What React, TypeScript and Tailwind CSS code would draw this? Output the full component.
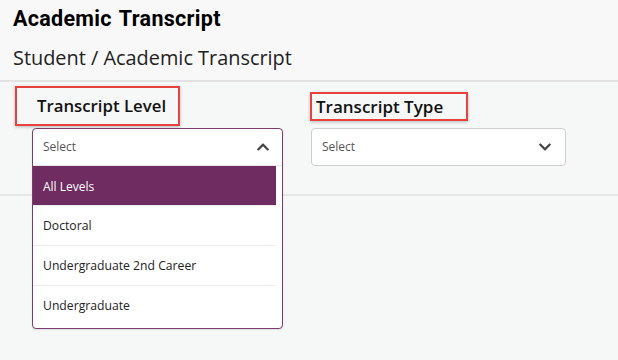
import { FaChevronDown, FaChevronUp } from 'react-icons/fa';

const levels = ['All Levels', 'Doctoral', 'Undergraduate 2nd Career', 'Undergraduate'];

export default function App() {
  return (
    <div className="w-[618px] h-[360px] overflow-hidden bg-[#f6f7f7] font-['Open_Sans',sans-serif] text-[#1b1b1b]">
      {/* page header */}
      <div className="h-[82px] px-[13px] pt-[6px] bg-[#f8f8f8] border-b-2 border-[#e2e2e2]">
        <h1 className="font-['Roboto',sans-serif] font-bold text-[21.5px] leading-[26px] text-black tracking-[0.3px] [word-spacing:2px]">
          Academic Transcript
        </h1>
        <div className="mt-[13px] text-[19.9px] leading-[26px] text-[#222]">Student / Academic Transcript</div>
      </div>

      {/* filter panel */}
      <div className="relative h-[114px] border-b-2 border-[#e6e6e6]">
        <div className="flex">
          <div className="relative w-[295px]">
            <div className="ml-[15px] mt-[4px] w-[165px] h-[40px] border-2 border-[#e8413f] shadow-[0_1px_3px_rgba(0,0,0,0.25)] pl-[20px] flex items-center">
              <span className="text-[16.8px] font-semibold text-[#111]">Transcript Level</span>
            </div>
            <div className="absolute left-[32px] top-[46px] w-[251px] z-10 bg-white border border-[#7b3b6c] rounded-[4px] shadow-[0_1px_2px_rgba(0,0,0,0.1)]">
              <div className="h-[37px] flex items-center justify-between pl-[10px] pr-[12px] border-b border-[#e5e5e5]">
                <span className="text-[12px] text-[#555]">Select</span>
                <FaChevronUp className="w-[14px] h-[14px] text-[#444]" />
              </div>
              <ul className="pb-[3px] pr-[6px]">
                {levels.map((l, i) => (
                  <li
                    key={l}
                    className={
                      i === 0
                        ? 'h-[39px] flex items-center pl-[10px] pt-[2px] bg-[#6e2c60] text-white text-[12px]'
                        : 'h-[40px] flex items-center pl-[10px] pt-[2px] text-[12.2px] text-[#222] border-t border-[#ececec]'
                    }
                  >
                    {l}
                  </li>
                ))}
              </ul>
            </div>
          </div>

          <div className="w-[300px] pl-[15px]">
            <div className="mt-[10px] w-[158px] h-[29px] border-2 border-[#e8413f] shadow-[0_1px_3px_rgba(0,0,0,0.25)] pl-[4px] flex items-center">
              <span className="text-[17px] font-semibold text-[#111]">Transcript Type</span>
            </div>
            <div className="mt-[7px] ml-[1px] w-[255px] h-[38px] bg-white border border-[#cfcfcf] rounded-[4px] flex items-center justify-between pl-[10px] pr-[13px]">
              <span className="text-[12px] text-[#555]">Select</span>
              <FaChevronDown className="w-[14px] h-[14px] text-[#444]" />
            </div>
          </div>
        </div>
      </div>
    </div>
  );
}
